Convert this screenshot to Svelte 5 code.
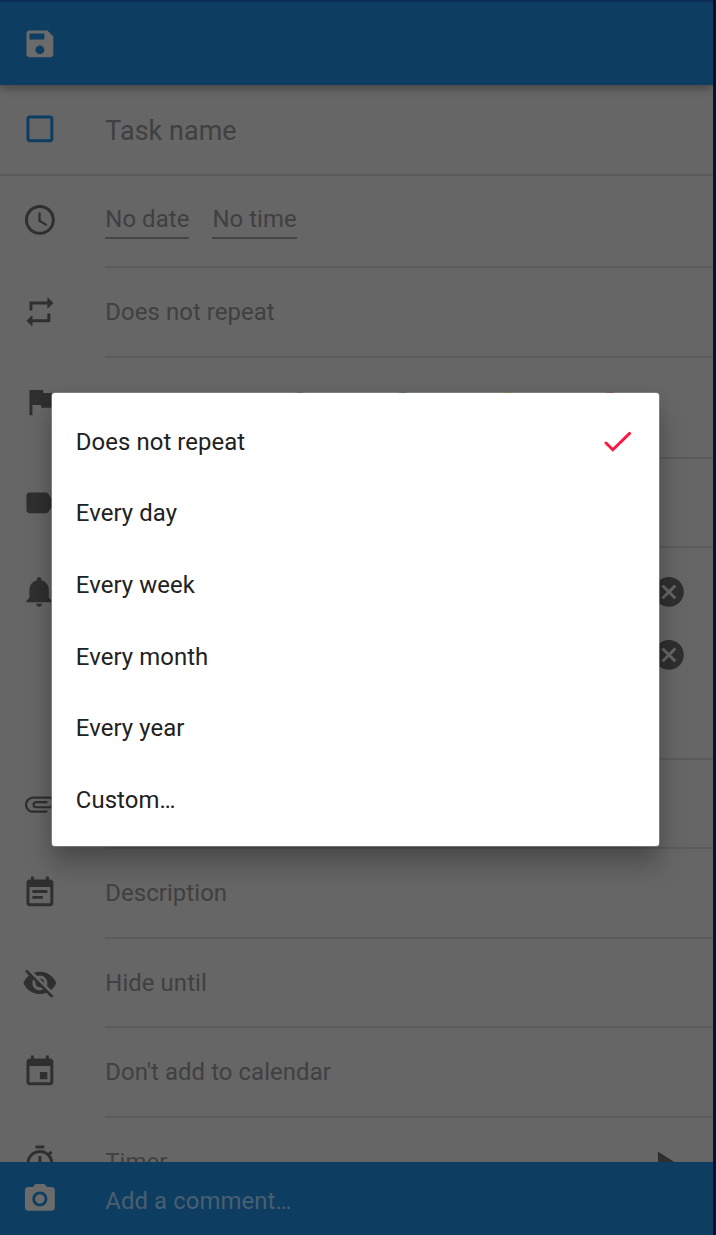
<script>
  const icons = {
    save: 'M17 3H5c-1.11 0-2 .9-2 2v14c0 1.1.89 2 2 2h14c1.1 0 2-.9 2-2V7l-4-4zm-5 16c-1.66 0-3-1.34-3-3s1.34-3 3-3 3 1.34 3 3-1.34 3-3 3zm3-10H5V5h10v4z',
    box: 'M19 5v14H5V5h14m0-2H5c-1.1 0-2 .9-2 2v14c0 1.1.9 2 2 2h14c1.1 0 2-.9 2-2V5c0-1.1-.9-2-2-2z',
    clock: 'M11.99 2C6.47 2 2 6.48 2 12s4.47 10 9.99 10C17.52 22 22 17.52 22 12S17.52 2 11.99 2zM12 20c-4.42 0-8-3.58-8-8s3.58-8 8-8 8 3.58 8 8-3.58 8-8 8zM12.5 7H11v6l5.25 3.15.75-1.23-4.5-2.67z',
    repeat: 'M7 7h10v3l4-4-4-4v3H5v6h2V7zm10 10H7v-3l-4 4 4 4v-3h12v-6h-2v4z',
    flag: 'M14.4 6L14 4H5v17h2v-7h5.6l.4 2h7V6z',
    label: 'M17.63 5.84C17.27 5.33 16.67 5 16 5L5 5.01C3.9 5.01 3 5.9 3 7v10c0 1.1.9 1.99 2 1.99L16 19c.67 0 1.27-.33 1.63-.84L22 12l-4.37-6.16z',
    bell: 'M11.5 22c1.1 0 2-.9 2-2h-4c0 1.1.9 2 2 2zm6.5-6v-5.5c0-3.07-2.13-5.64-5-6.32V3.5c0-.83-.67-1.5-1.5-1.5S10 2.67 10 3.5v.68c-2.87.68-5 3.25-5 6.32V16l-2 2v1h17v-1l-2-2z',
    clip: 'M2 12.5C2 9.46 4.46 7 7.5 7H18c2.21 0 4 1.79 4 4s-1.79 4-4 4H9.5C8.12 15 7 13.88 7 12.5S8.12 10 9.5 10H17v1.5H9.5c-.55 0-1 .45-1 1s.45 1 1 1H18c1.38 0 2.5-1.12 2.5-2.5S19.38 8.5 18 8.5H7.5c-2.21 0-4 1.79-4 4s1.79 4 4 4H17V18H7.5C4.46 18 2 15.54 2 12.5z',
    note: 'M17 10H7v2h10v-2zm2-7h-1V1h-2v2H8V1H6v2H5c-1.11 0-1.99.9-1.99 2L3 19c0 1.1.89 2 2 2h14c1.1 0 2-.9 2-2V5c0-1.1-.9-2-2-2zm0 16H5V8h14v11zm-5-5H7v2h7v-2z',
    hidden: 'M12 7c2.76 0 5 2.24 5 5 0 .65-.13 1.26-.36 1.83l2.92 2.92c1.51-1.26 2.7-2.89 3.43-4.75-1.73-4.39-6-7.5-11-7.5-1.4 0-2.74.25-3.98.7l2.16 2.16C10.74 7.13 11.35 7 12 7zM2 4.27l2.28 2.28.46.46C3.08 8.3 1.78 10.02 1 12c1.73 4.39 6 7.5 11 7.5 1.55 0 3.03-.3 4.38-.84l.42.42L19.73 22 21 20.73 3.27 3 2 4.27zM7.53 9.8l1.55 1.55c-.05.21-.08.43-.08.65 0 1.66 1.34 3 3 3 .22 0 .44-.03.65-.08l1.55 1.55c-.67.33-1.41.53-2.2.53-2.76 0-5-2.24-5-5 0-.79.2-1.53.53-2.2zm4.31-.78l3.15 3.15.02-.16c0-1.66-1.34-3-3-3l-.17.01z',
    event: 'M17 12h-5v5h5v-5zM16 1v2H8V1H6v2H5c-1.11 0-1.99.9-1.99 2L3 19c0 1.1.89 2 2 2h14c1.1 0 2-.9 2-2V5c0-1.1-.9-2-2-2h-1V1h-2zm3 18H5V8h14v11z',
    timer: 'M15 1H9v2h6V1zm-4 13h2V8h-2v6zm8.03-6.61l1.42-1.42c-.43-.51-.9-.99-1.41-1.41l-1.42 1.42C16.07 4.74 14.12 4 12 4c-4.97 0-9 4.03-9 9s4.02 9 9 9 9-4.03 9-9c0-2.12-.74-4.07-1.97-5.61zM12 20c-3.87 0-7-3.13-7-7s3.13-7 7-7 7 3.13 7 7-3.13 7-7 7z',
    play: 'M8 5v14l11-7z',
    cancel: 'M12 2C6.47 2 2 6.47 2 12s4.47 10 10 10 10-4.47 10-10S17.53 2 12 2zm5 13.59L15.59 17 12 13.41 8.41 17 7 15.59 10.59 12 7 8.41 8.41 7 12 10.59 15.59 7 17 8.41 13.41 12 17 15.59z',
    camera: 'M9 2L7.17 4H4c-1.1 0-2 .9-2 2v12c0 1.1.9 2 2 2h16c1.1 0 2-.9 2-2V6c0-1.1-.9-2-2-2h-3.17L15 2H9zm3 15c-2.76 0-5-2.24-5-5s2.24-5 5-5 5 2.24 5 5-2.24 5-5 5zM12 8.8A3.2 3.2 0 1 0 12 15.2 3.2 3.2 0 1 0 12 8.8z',
    radio: 'M12 2C6.48 2 2 6.48 2 12s4.48 10 10 10 10-4.48 10-10S17.52 2 12 2zm0 18c-4.42 0-8-3.58-8-8s3.58-8 8-8 8 3.58 8 8-3.58 8-8 8z'
  };
  const priorities = ['grey', 'blue', 'amber', 'red'];
  const options = ['Does not repeat', 'Every day', 'Every week', 'Every month', 'Every year', 'Custom…'];
  let selected = $state(0);
</script>

{#snippet icon(name)}
  <svg class="icon" viewBox="0 0 24 24"><path d={icons[name]} /></svg>
{/snippet}

<div class="screen">
  <div class="app">
    <header class="toolbar">{@render icon('save')}</header>
    <main>
      <div class="row task">{@render icon('box')}<div class="body title">Task name</div></div>
      <div class="row when">
        {@render icon('clock')}
        <div class="body line"><span class="field">No date</span><span class="field">No time</span></div>
      </div>
      <div class="row">{@render icon('repeat')}<div class="body line">Does not repeat</div></div>
      <div class="row priority">
        {@render icon('flag')}
        <div class="body line radios">
          {#each priorities as p}<span class="radio {p}">{@render icon('radio')}</span>{/each}
        </div>
      </div>
      <div class="row tight">{@render icon('label')}<div class="body line"></div></div>
      <div class="row reminders">
        {@render icon('bell')}
        <div class="body line removes">{@render icon('cancel')}{@render icon('cancel')}</div>
      </div>
      <div class="row tight">{@render icon('clip')}<div class="body line"></div></div>
      <div class="row">{@render icon('note')}<div class="body line">Description</div></div>
      <div class="row tight">{@render icon('hidden')}<div class="body line">Hide until</div></div>
      <div class="row">{@render icon('event')}<div class="body line">Don't add to calendar</div></div>
      <div class="row">{@render icon('timer')}<div class="body line timer">Timer{@render icon('play')}</div></div>
    </main>
    <footer class="comment">{@render icon('camera')}<div class="hint">Add a comment…</div></footer>
  </div>

  <div class="dialog" role="listbox">
    {#each options as option, i}
      <div class="option" role="option" aria-selected={selected === i} tabindex="0"
        onclick={() => (selected = i)} onkeydown={(e) => e.key === 'Enter' && (selected = i)}>
        {option}
        {#if selected === i}
          <svg class="check" viewBox="0 0 28 22"><path d="M2 12l6.8 6.8L25.6 2.4" /></svg>
        {/if}
      </div>
    {/each}
  </div>
</div>

<style>
  :global(body) { background: #0c0f33; }
  .screen {
    position: relative;
    width: 716px;
    height: 1235px;
    overflow: hidden;
    background: #0c0f33;
    font: 23.9px/28px Roboto, sans-serif;
    letter-spacing: 0.08px;
  }
  .app {
    width: 713px;
    height: 1235px;
    display: flex;
    flex-direction: column;
    background: #666;
    color: #404040;
  }
  .icon {
    width: 35.8px;
    height: 35.8px;
    flex: none;
    display: block;
    fill: #2f2f2f;
  }
  .toolbar {
    box-sizing: border-box;
    height: 85px;
    flex: none;
    display: flex;
    align-items: center;
    padding: 0 0 0 21.8px;
    border-top: 2px solid #0b2d57;
    background: #0d3d61;
    box-shadow: 0 3px 9px rgba(0, 0, 0, 0.34);
    z-index: 1;
  }
  .toolbar .icon, .comment .icon { fill: #6b6b6b; }
  main { flex: 1; min-height: 0; overflow: hidden; }
  .row {
    box-sizing: border-box;
    height: 90px;
    display: flex;
    align-items: center;
    padding-left: 21.8px;
  }
  .row > .icon { margin-bottom: 2px; }
  .tight { height: 89px; }
  .body {
    box-sizing: border-box;
    flex: 1;
    height: 100%;
    display: flex;
    align-items: center;
    margin-left: 47.7px;
  }
  .line { border-bottom: 2px solid #5b5b5b; }
  .task { height: 91px; border-bottom: 2px solid #5b5b5b; }
  .task > .icon { fill: #0d3d61; margin-bottom: 1px; }
  .title { font-size: 26.9px; padding-top: 2px; }
  .when { height: 92px; }
  .when > .icon { margin-bottom: 5px; }
  .when .body { gap: 23px; }
  .field { border-bottom: 2px solid #454545; padding-bottom: 4px; margin-top: 2px; }
  .priority { height: 101px; }
  .priority > .icon { margin-bottom: 14px; }
  .radios { justify-content: space-between; padding: 0 85px 2px 176.7px; }
  .grey .icon { fill: #333; }
  .blue .icon { fill: #0d3d61; }
  .amber .icon { fill: #66500a; }
  .red .icon { fill: #601815; }
  .reminders { height: 212px; align-items: flex-start; }
  .reminders > .icon { margin-top: 26px; }
  .removes { flex-direction: column; align-items: flex-end; gap: 26.9px; padding: 26px 26.4px 0 0; }
  .timer { justify-content: space-between; padding-right: 31.5px; }
  .comment {
    height: 73px;
    flex: none;
    display: flex;
    align-items: center;
    padding-left: 21.8px;
    background: #0d3d61;
    color: #4a5f6f;
  }
  .hint { margin: 4px 0 0 47.7px; }
  .dialog {
    position: absolute;
    left: 52px;
    top: 393px;
    box-sizing: border-box;
    width: 607px;
    height: 453px;
    padding: 13px 0 0;
    border-radius: 3px;
    background: #fff;
    color: #212121;
    box-shadow: 0 0 0 0.6px #999, 0 18px 28px rgba(0, 0, 0, 0.26), 0 4px 14px rgba(0, 0, 0, 0.08);
  }
  .option {
    height: 71.6px;
    display: flex;
    align-items: center;
    justify-content: space-between;
    padding: 0 27px 0 23.8px;
    outline: none;
  }
  .check { width: 28px; height: 22px; fill: none; stroke: #ff1744; stroke-width: 2.9; stroke-linecap: round; }
</style>
